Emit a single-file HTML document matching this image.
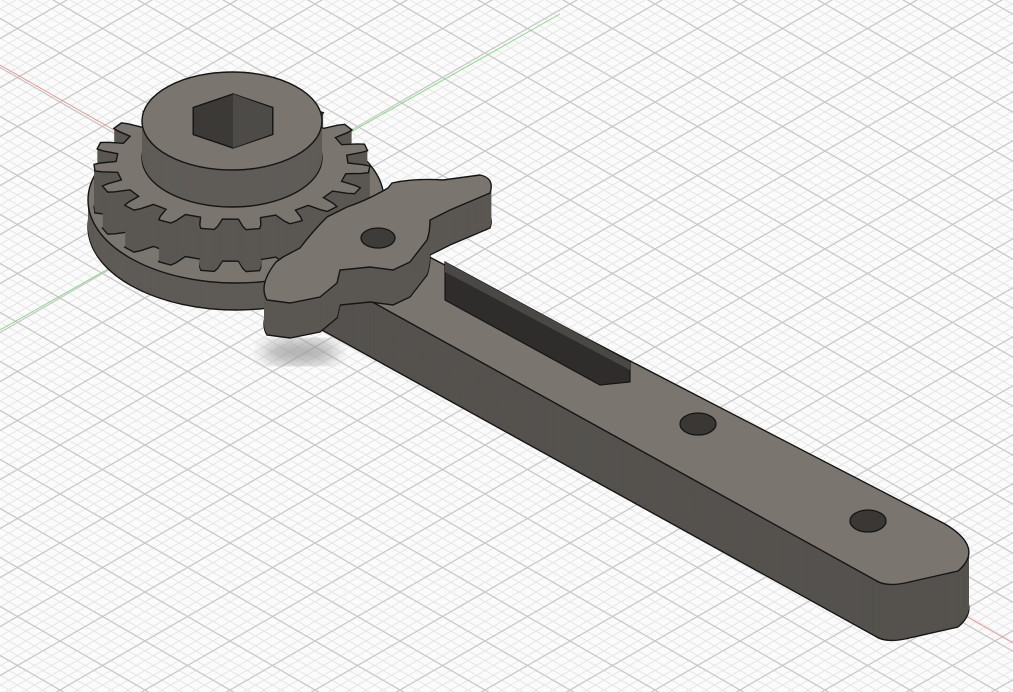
<!DOCTYPE html>
<html><head><meta charset="utf-8"><style>
html,body{margin:0;padding:0;background:#fafafa;overflow:hidden}
svg{display:block}
</style></head><body>
<svg id="s" width="1013" height="692" viewBox="0 0 1013 692" xmlns="http://www.w3.org/2000/svg">
<defs>
<pattern id="g" width="85" height="49" patternUnits="userSpaceOnUse" patternTransform="translate(740,102)">
<rect width="85" height="49" fill="#fbfbfb"/>
<g stroke="#e6e6e6" stroke-width="1">
<path d="M0,-39.2L85,9.8M0,-29.4L85,19.6M0,-19.6L85,29.4M0,-9.8L85,39.2M0,9.8L85,58.8M0,19.6L85,68.6M0,29.4L85,78.4M0,39.2L85,88.2"/>
<path d="M0,88.2L85,39.2M0,78.4L85,29.4M0,68.6L85,19.6M0,58.8L85,9.8M0,39.2L85,-9.8M0,29.4L85,-19.6M0,19.6L85,-29.4M0,9.8L85,-39.2"/>
</g>
<g stroke="#c9c9c9" stroke-width="1.3">
<path d="M0,0L85,49M0,-49L85,0M0,49L85,98"/>
<path d="M0,49L85,0M0,98L85,49M0,0L85,-49"/>
</g>
</pattern>
<filter id="bl"><feGaussianBlur stdDeviation="8"/></filter>
</defs>
<rect width="1013" height="692" fill="url(#g)"/>
<line x1="0" y1="65" x2="1013" y2="643" stroke="#e59a9a" stroke-width="1"/>
<line x1="0" y1="330" x2="560" y2="14" stroke="#8fd68f" stroke-width="1"/>
<ellipse cx="300" cy="352" rx="38" ry="12" fill="#999" filter="url(#bl)" opacity="0.8"/>
<g id="m"></g>
</svg>
<script>
var NS="http://www.w3.org/2000/svg",m=document.getElementById('m');
var TOP="#7a766f",SIDE="#5a5753",ST="#151515";
function el(t,a){var e=document.createElementNS(NS,t);for(var k in a)e.setAttribute(k,a[k]);m.appendChild(e);return e;}
function extrude(d,depth,top,side){
  el('path',{d:d,fill:side,stroke:ST,'stroke-width':1.4,transform:'translate(0,'+depth+')'});
  for(var i=depth-1;i>0;i--)el('path',{d:d,fill:side,transform:'translate(0,'+i+')'});
  el('path',{d:d,fill:top,stroke:ST,'stroke-width':1.4});
}
function ell(cx,cy,rx,ry){return 'M'+(cx-rx)+','+cy+' A'+rx+','+ry+' 0 1 0 '+(cx+rx)+','+cy+' A'+rx+','+ry+' 0 1 0 '+(cx-rx)+','+cy+'Z';}
// handle
extrude('M300,190 L945,524 Q985,548 958,571 L905,583 Q885,587 875,580 L300,262 Z',56,TOP,"#55524e");
// slot
el('path',{d:'M445,262 L630,362 L630,382 L600,385 L445,300 Z',fill:"#2e2d2b",stroke:ST,'stroke-width':1.2});
el('path',{d:'M445,262 L630,362 L630,370 L445,272 Z',fill:"#4a4845"});
// holes
el('ellipse',{cx:698,cy:424,rx:18,ry:11,fill:"#3a3835",stroke:ST,'stroke-width':1.3});
el('ellipse',{cx:868,cy:521,rx:18,ry:11,fill:"#3a3835",stroke:ST,'stroke-width':1.3});
// base disc
extrude(ell(236,200,148,83),27,TOP,"#5e5b57");
// gear
var n=19,cx=232,cy=163,Ro=1,Ri=0.84,rx=138,ry=67,d='';
for(var i=0;i<n;i++){
  var a=i*2*Math.PI/n,s=2*Math.PI/n;
  var pts=[[a,Ri],[a+s*0.08,Ro*0.95],[a+s*0.14,Ro],[a+s*0.44,Ro],[a+s*0.50,Ro*0.95],[a+s*0.58,Ri]];
  pts.forEach(function(p,j){var x=cx+rx*p[1]*Math.cos(p[0]),y=cy+ry*p[1]*Math.sin(p[0]);d+=(i==0&&j==0?'M':'L')+x.toFixed(1)+','+y.toFixed(1)+' ';});
}
d+='Z';
extrude(d,42,TOP,SIDE);
// boss
extrude(ell(232,121,90,49),37,TOP,"#5f5c58");
// hex hole
var h='';for(var i=0;i<6;i++){var a=i*Math.PI/3+Math.PI/6;h+=(i?'L':'M')+(233+46*Math.cos(a)).toFixed(1)+','+(121+27*Math.sin(a)).toFixed(1)+' ';}
el('path',{d:h+'Z',fill:"#3c3a37",stroke:ST,'stroke-width':1.4});
el('path',{d:'M233,94 L272,108 L272,134 L233,148 Z',fill:"#4d4b48"});
// pawl
extrude('M267,300 Q258,285 276,262 L283,257 L300,248 Q312,232 327,217 L347,207 Q368,200 388,188 L392,183 Q415,178 443,180 L480,175 Q495,178 490,193 L450,210 L430,220 Q430,232 427,240 L410,262 L393,270 L370,267 L340,270 L337,283 L320,297 L290,303 Z',35,TOP,SIDE);
el('ellipse',{cx:378,cy:238,rx:17,ry:10,fill:"#3e3c39",stroke:ST,'stroke-width':1.3});
</script>
</body></html>
